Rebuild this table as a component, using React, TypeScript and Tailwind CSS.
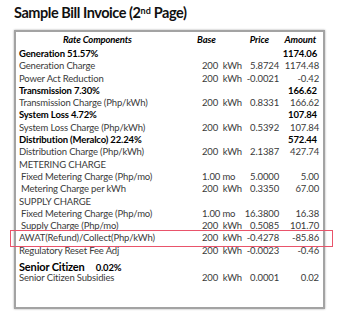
type Row = {
  label: string;
  base?: string;
  price?: string;
  amount?: string;
  bold?: boolean;
  indent?: boolean;
  highlight?: boolean;
};

const rows: Row[] = [
  { label: "Generation 51.57%", amount: "1174.06", bold: true },
  { label: "Generation Charge", base: "200  kWh", price: "5.8724", amount: "1174.48" },
  { label: "Power Act Reduction", base: "200  kWh", price: "-0.0021", amount: "-0.42" },
  { label: "Transmission 7.30%", amount: "166.62", bold: true },
  { label: "Transmission Charge (Php/kWh)", base: "200  kWh", price: "0.8331", amount: "166.62" },
  { label: "System Loss 4.72%", amount: "107.84", bold: true },
  { label: "System Loss Charge (Php/kWh)", base: "200  kWh", price: "0.5392", amount: "107.84" },
  { label: "Distribution (Meralco) 22.24%", amount: "572.44", bold: true },
  { label: "Distribution Charge (Php/kWh)", base: "200  kWh", price: "2.1387", amount: "427.74" },
  { label: "METERING CHARGE" },
  { label: "Fixed Metering Charge (Php/mo)", base: "1.00 mo", price: "5.0000", amount: "5.00", indent: true },
  { label: "Metering Charge per kWh", base: "200  kWh", price: "0.3350", amount: "67.00", indent: true },
  { label: "SUPPLY CHARGE" },
  { label: "Fixed Metering Charge (Php/mo)", base: "1.00 mo", price: "16.3800", amount: "16.38", indent: true },
  { label: "Supply Charge (Php/mo)", base: "200  kWh", price: "0.5085", amount: "101.70", indent: true },
  { label: "AWAT(Refund)/Collect(Php/kWh)", base: "200  kWh", price: "-0.4278", amount: "-85.86", highlight: true },
  { label: "Regulatory Reset Fee Adj", base: "200  kWh", price: "-0.0023", amount: "-0.46" },
];

const grid = "grid grid-cols-[183px_38px_39px_40px]";

function BillRow({ row }: { row: Row }) {
  return (
    <div
      className={`${grid} relative h-[12.3px] leading-[12.3px] whitespace-pre ${
        row.bold ? "font-bold text-black" : "text-[#3a3a3a]"
      }`}
    >
      <span className={row.indent ? "pl-[2px]" : ""}>{row.label}</span>
      <span>{row.base}</span>
      <span className="text-right">{row.price}</span>
      <span className={`text-right ${row.bold ? "pr-[2px]" : ""}`}>{row.amount}</span>
      {row.highlight && (
        <span className="absolute -left-[9px] -right-[14px] -top-[2px] -bottom-[2px] border-[1.5px] border-[#e9546b]" />
      )}
    </div>
  );
}

function App() {
  return (
    <div
      className="w-[348px] h-[312px] bg-white pl-[14px] pt-[4px]"
      style={{ fontFamily: "Lato, 'Liberation Sans', sans-serif" }}
    >
      <h1 className="text-[14.5px] leading-[18px] font-bold tracking-[-0.45px] text-[#111]">
        Sample Bill Invoice (2<sup className="text-[9px] tracking-normal">nd</sup> Page)
      </h1>
      <div className="mt-[8px] w-[311px] h-[279px] border-2 border-[#a3a3a3] shadow-[0_0_2px_rgba(0,0,0,0.35)] pl-[3px] pr-[4px] pt-[1px] text-[9.5px] tracking-[-0.15px]">
        <div className={`${grid} h-[13px] leading-[13px] font-bold italic text-black`}>
          <span className="pl-[44px]">Rate Components</span>
          <span className="-ml-[5px]">Base</span>
          <span className="text-right pr-[10px]">Price</span>
          <span className="text-right pr-[3px]">Amount</span>
        </div>
        <div className="mt-[2px]">
          {rows.map((r, i) => (
            <BillRow key={i} row={r} />
          ))}
        </div>
        <div className="mt-[4px]">
          <div className="flex items-baseline font-bold text-black leading-[11px]">
            <span className="text-[11px]">Senior Citizen</span>
            <span className="ml-[11px] text-[9.5px]">0.02%</span>
          </div>
          <div className={`${grid} leading-[9px] text-[#3a3a3a] whitespace-pre`}>
            <span>Senior Citizen Subsidies</span>
            <span>200  kWh</span>
            <span className="text-right">0.0001</span>
            <span className="text-right">0.02</span>
          </div>
        </div>
      </div>
    </div>
  );
}

export default App;
